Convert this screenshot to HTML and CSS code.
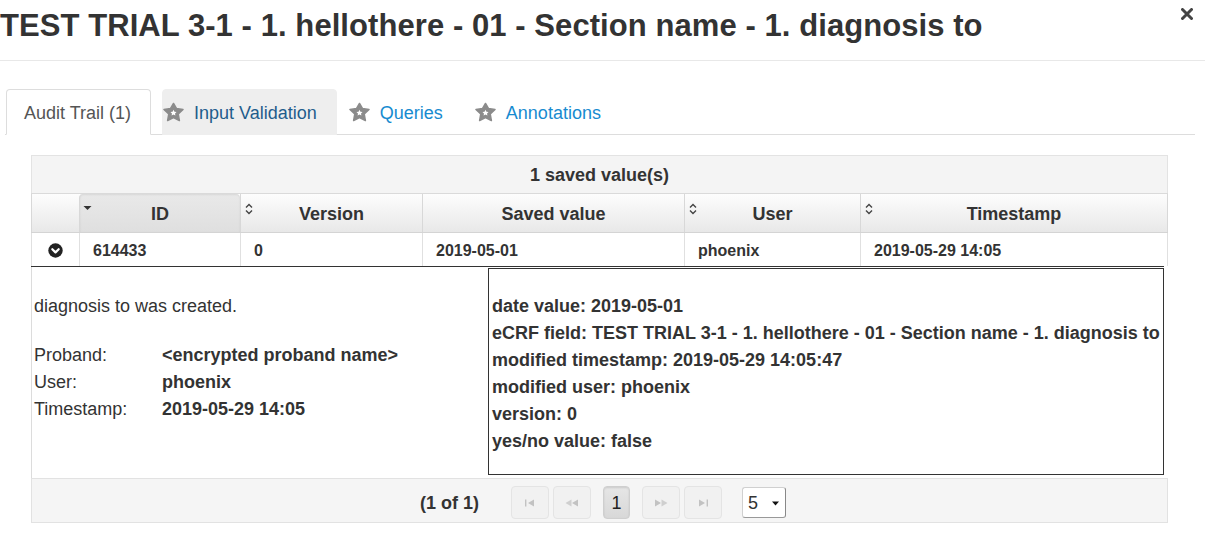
FILE: index.html
```html
<!DOCTYPE html>
<html>
<head>
<meta charset="utf-8">
<link rel="stylesheet" href="styles.css">
</head>
<body>
<div class="dialog">
  <div class="titlebar">
    <h1 class="title">TEST TRIAL 3-1 - 1. hellothere - 01 - Section name - 1. diagnosis to</h1>
    <span class="close">
      <svg width="12" height="12" viewBox="0 0 12 12"><path d="M1.5 1.5 L10.5 10.5 M10.5 1.5 L1.5 10.5" stroke="#444" stroke-width="3" stroke-linecap="round"/></svg>
    </span>
  </div>

  <ul class="tabs">
    <li class="tab tab-active">Audit Trail (1)</li>
    <li class="tab tab-star tab-hover">
      <svg class="star" width="21" height="20" viewBox="0 0 21 20"><g transform="translate(0.5 0.5)"><polygon points="10,1 12.94,5.95 19.51,6.91 14.76,11.55 15.88,18.09 10,15 4.12,18.09 5.24,11.55 0.49,6.91 7.06,5.95" fill="#8b8b8b" stroke="#8b8b8b" stroke-width="1.5" stroke-linejoin="round"/><polygon transform="translate(10 10.5) scale(0.32) translate(-10 -10)" points="10,0 12.94,5.95 19.51,6.91 14.76,11.55 15.88,18.09 10,15 4.12,18.09 5.24,11.55 0.49,6.91 7.06,5.95" fill="#fff"/></g></svg>
      <span class="tab-link dark">Input Validation</span>
    </li>
    <li class="tab tab-star">
      <svg class="star" width="21" height="20" viewBox="0 0 21 20"><g transform="translate(0.5 0.5)"><polygon points="10,1 12.94,5.95 19.51,6.91 14.76,11.55 15.88,18.09 10,15 4.12,18.09 5.24,11.55 0.49,6.91 7.06,5.95" fill="#8b8b8b" stroke="#8b8b8b" stroke-width="1.5" stroke-linejoin="round"/><polygon transform="translate(10 10.5) scale(0.32) translate(-10 -10)" points="10,0 12.94,5.95 19.51,6.91 14.76,11.55 15.88,18.09 10,15 4.12,18.09 5.24,11.55 0.49,6.91 7.06,5.95" fill="#fff"/></g></svg>
      <span class="tab-link">Queries</span>
    </li>
    <li class="tab tab-star">
      <svg class="star" width="21" height="20" viewBox="0 0 21 20"><g transform="translate(0.5 0.5)"><polygon points="10,1 12.94,5.95 19.51,6.91 14.76,11.55 15.88,18.09 10,15 4.12,18.09 5.24,11.55 0.49,6.91 7.06,5.95" fill="#8b8b8b" stroke="#8b8b8b" stroke-width="1.5" stroke-linejoin="round"/><polygon transform="translate(10 10.5) scale(0.32) translate(-10 -10)" points="10,0 12.94,5.95 19.51,6.91 14.76,11.55 15.88,18.09 10,15 4.12,18.09 5.24,11.55 0.49,6.91 7.06,5.95" fill="#fff"/></g></svg>
      <span class="tab-link">Annotations</span>
    </li>
  </ul>

  <div class="panel">
    <div class="caption">1 saved value(s)</div>

    <div class="grid-row head-row">
      <div class="cell hcell"></div>
      <div class="cell hcell hcell-active">
        <svg class="sort-icon" width="9" height="6" viewBox="0 0 9 6"><polygon points="0.5,1 8.5,1 4.5,5" fill="#333"/></svg>
        ID
      </div>
      <div class="cell hcell">
        <svg class="sort-icon sort-both" width="8" height="12" viewBox="0 0 8 12"><path d="M1 4.5 L4 1.5 L7 4.5 M1 7.5 L4 10.5 L7 7.5" fill="none" stroke="#444" stroke-width="1.4"/></svg>
        Version
      </div>
      <div class="cell hcell">Saved value</div>
      <div class="cell hcell">
        <svg class="sort-icon sort-both" width="8" height="12" viewBox="0 0 8 12"><path d="M1 4.5 L4 1.5 L7 4.5 M1 7.5 L4 10.5 L7 7.5" fill="none" stroke="#444" stroke-width="1.4"/></svg>
        User
      </div>
      <div class="cell hcell">
        <svg class="sort-icon sort-both" width="8" height="12" viewBox="0 0 8 12"><path d="M1 4.5 L4 1.5 L7 4.5 M1 7.5 L4 10.5 L7 7.5" fill="none" stroke="#444" stroke-width="1.4"/></svg>
        Timestamp
      </div>
    </div>

    <div class="grid-row data-row">
      <div class="cell dcell toggle-cell">
        <svg width="15" height="15" viewBox="0 0 15 15"><circle cx="7.5" cy="7.5" r="7.2" fill="#222"/><path d="M4.3 6.2 L7.5 9.4 L10.7 6.2" fill="none" stroke="#fff" stroke-width="2.2" stroke-linecap="round" stroke-linejoin="round"/></svg>
      </div>
      <div class="cell dcell">614433</div>
      <div class="cell dcell">0</div>
      <div class="cell dcell">2019-05-01</div>
      <div class="cell dcell">phoenix</div>
      <div class="cell dcell">2019-05-29 14:05</div>
    </div>

    <div class="expansion">
      <div class="exp-left">
        <p class="exp-msg">diagnosis to was created.</p>
        <div class="exp-props">
          <span class="lbl">Proband:</span><span class="val">&lt;encrypted proband name&gt;</span>
          <span class="lbl">User:</span><span class="val">phoenix</span>
          <span class="lbl">Timestamp:</span><span class="val">2019-05-29 14:05</span>
        </div>
      </div>
      <div class="exp-box">
        <div>date value: 2019-05-01</div>
        <div>eCRF field: TEST TRIAL 3-1 - 1. hellothere - 01 - Section name - 1. diagnosis to</div>
        <div>modified timestamp: 2019-05-29 14:05:47</div>
        <div>modified user: phoenix</div>
        <div>version: 0</div>
        <div>yes/no value: false</div>
      </div>
    </div>

    <div class="paginator">
      <span class="page-current">(1 of 1)</span>
      <span class="pbtn pbtn-first">
        <svg width="12" height="8" viewBox="0 0 12 8"><rect x="1" y="0.5" width="1.4" height="7" fill="#c2c2c2"/><polygon points="10,0.5 10,7.5 4,4" fill="#c2c2c2"/></svg>
      </span>
      <span class="pbtn pbtn-prev">
        <svg width="14" height="8" viewBox="0 0 14 8"><polygon points="6.5,0.5 6.5,7.5 0.5,4" fill="#cfcfcf"/><polygon points="13,0.5 13,7.5 7,4" fill="#c2c2c2"/></svg>
      </span>
      <span class="pbtn pbtn-page">1</span>
      <span class="pbtn pbtn-next">
        <svg width="14" height="8" viewBox="0 0 14 8"><polygon points="1,0.5 1,7.5 7,4" fill="#c2c2c2"/><polygon points="7.5,0.5 7.5,7.5 13.5,4" fill="#cfcfcf"/></svg>
      </span>
      <span class="pbtn pbtn-last">
        <svg width="12" height="8" viewBox="0 0 12 8"><polygon points="2,0.5 2,7.5 8,4" fill="#c2c2c2"/><rect x="9.6" y="0.5" width="1.4" height="7" fill="#c2c2c2"/></svg>
      </span>
      <span class="rpp">
        <span class="rpp-val">5</span>
        <svg class="rpp-arrow" width="7" height="5" viewBox="0 0 7 5"><polygon points="0,0.5 7,0.5 3.5,4.5" fill="#111"/></svg>
      </span>
    </div>
  </div>
</div>
</body>
</html>
```

FILE: styles.css
```css
html, body {
  margin: 0;
  padding: 0;
  background: #fff;
}

body {
  font-family: "Liberation Sans", Arial, Helvetica, sans-serif;
  color: #333;
  width: 1205px;
  height: 545px;
  overflow: hidden;
}

.titlebar {
  height: 60px;
  border-bottom: 1px solid #e8e8e8;
  display: flex;
  justify-content: space-between;
  align-items: flex-start;
}

.title {
  margin: 8px 0 0 0;
  font-size: 31px;
  line-height: 36px;
  font-weight: bold;
  color: #333;
  white-space: nowrap;
  letter-spacing: 0.07px;
}

.close {
  display: block;
  margin: 8px 12px 0 0;
  width: 12px;
  height: 12px;
}

.close svg {
  display: block;
}

/* Tabs */
.tabs {
  list-style: none;
  display: flex;
  gap: 11px;
  margin: 28px 10px 0 5px;
  padding: 0 0 0 1px;
  height: 45px;
  border-bottom: 1px solid #ddd;
}

.tab {
  box-sizing: border-box;
  height: 46px;
  margin-bottom: -1px;
  display: flex;
  align-items: center;
  font-size: 18px;
  border: 1px solid transparent;
  border-radius: 4px 4px 0 0;
  padding: 3px 19px 0 17px;
  white-space: nowrap;
}

.tab-active {
  background: #fff;
  border-color: #ddd;
  border-bottom-color: #fff;
  color: #555;
}

.tab-star {
  padding-left: 0;
  padding-right: 19px;
}

.tab-hover {
  background: #eee;
  border-color: #eee;
}

.star {
  display: block;
  margin-right: 10px;
  margin-top: -3px;
}

.tab-link {
  color: #178bd0;
}

.tab-link.dark {
  color: #1f5d8c;
}

/* Panel */
.panel {
  margin: 20px 0 0 31px;
  width: 1137px;
}

.caption {
  box-sizing: border-box;
  height: 38px;
  border: 1px solid #e3e3e3;
  border-bottom: none;
  background: #f4f4f4;
  text-align: center;
  font-weight: bold;
  font-size: 18px;
  line-height: 39px;
}

.grid-row {
  display: grid;
  grid-template-columns: 48px 161px 182px 262px 176px 308px;
}

.head-row {
  border-top: 1px solid #dadada;
  border-bottom: 1px solid #d4d4d4;
}

.cell {
  box-sizing: border-box;
  border-left: 1px solid #d8d8d8;
  position: relative;
}

.cell:last-child {
  border-right: 1px solid #d8d8d8;
}

.hcell {
  height: 38px;
  background: linear-gradient(#fdfdfd, #e8e8e8);
  font-weight: bold;
  font-size: 18px;
  line-height: 40px;
  text-align: center;
}

.hcell-active {
  background: linear-gradient(#e9e9e9, #dfdfdf);
  border-radius: 4px 4px 0 0;
  box-shadow: inset 0 1px 2px rgba(0, 0, 0, 0.08);
}

.sort-icon {
  position: absolute;
  left: 3px;
  top: 11px;
}

.sort-icon.sort-both {
  left: 4px;
  top: 9px;
}

.data-row .cell {
  border-left-color: #e0e0e0;
}

.data-row .cell:last-child {
  border-right-color: #e0e0e0;
}

.dcell {
  height: 33px;
  background: #fff;
  font-weight: bold;
  font-size: 16px;
  line-height: 35px;
  padding-left: 13px;
  white-space: nowrap;
}

.toggle-cell {
  padding: 0;
  display: flex;
  align-items: center;
  justify-content: center;
}

.toggle-cell svg {
  display: block;
  margin-top: 2px;
}

/* Expansion */
.expansion {
  width: 1133px;
  border-top: 1px solid #333;
  display: grid;
  grid-template-columns: 457px 676px;
}

.exp-left {
  box-sizing: border-box;
  border-left: 1px solid #dcdcdc;
  padding: 26px 0 0 2px;
  font-size: 18px;
  line-height: 27px;
}

.exp-msg {
  margin: 0 0 22px 0;
}

.exp-props {
  display: grid;
  grid-template-columns: 128px auto;
}

.val {
  font-weight: bold;
  white-space: nowrap;
}

.exp-box {
  box-sizing: border-box;
  height: 207px;
  margin: 1px 0 3px 0;
  border: 1px solid #333;
  padding: 24px 2px 0 3px;
  font-size: 18px;
  line-height: 27px;
  font-weight: bold;
  white-space: nowrap;
}

/* Paginator */
.paginator {
  box-sizing: border-box;
  height: 45px;
  border: 1px solid #e2e2e2;
  background: #f5f5f5;
  display: flex;
  justify-content: center;
  align-items: flex-start;
  padding: 7px 0 0 7px;
}

.page-current {
  font-weight: bold;
  font-size: 18px;
  line-height: 35px;
  margin-right: 32px;
}

.pbtn {
  box-sizing: border-box;
  width: 38px;
  height: 33px;
  border: 1px solid #e4e4e4;
  border-radius: 4px;
  background: #f1f1f1;
  display: flex;
  align-items: center;
  justify-content: center;
}

.pbtn svg {
  display: block;
}

.pbtn-prev {
  margin-left: 4px;
}

.pbtn-page {
  width: 27px;
  margin: 0 12px;
  background: linear-gradient(#e6e6e6, #d8d8d8);
  border-color: #cfcfcf;
  box-shadow: inset 0 1px 2px rgba(0, 0, 0, 0.12);
  font-size: 18px;
  color: #222;
  padding-top: 2px;
}

.pbtn-last {
  margin-left: 4px;
}

.rpp {
  box-sizing: border-box;
  width: 44px;
  height: 31px;
  margin: 1px 0 0 20px;
  background: #fff;
  border: 1px solid #d0d0d0;
  border-right-color: #888;
  border-bottom-color: #999;
  border-radius: 3px;
  display: flex;
  align-items: center;
  padding: 2px 0 0 5px;
  font-size: 18px;
}

.rpp-val {
  flex: 1;
}

.rpp-arrow {
  display: block;
  margin-right: 6px;
  margin-top: -1px;
}
```
